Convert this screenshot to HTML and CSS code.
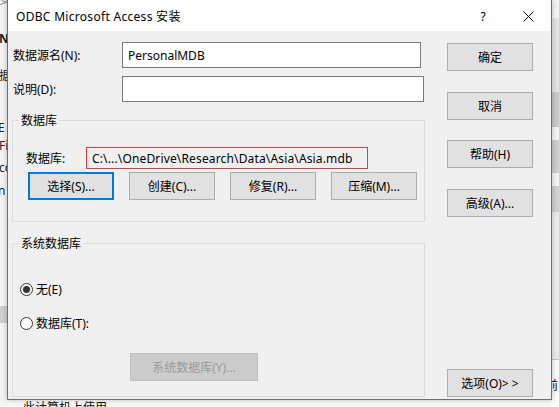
FILE: index.html
```html
<!DOCTYPE html>
<html lang="zh-CN">
<head>
<meta charset="utf-8">
<title>ODBC Microsoft Access 安装</title>
<link rel="stylesheet" href="styles.css">
</head>
<body>
<div class="desktop">
  <div class="bg-left">
    <div class="frag f1">安</div>
    <div class="frag f2">N</div>
    <div class="frag f3">据</div>
    <div class="frag f4">E</div>
    <div class="frag f5">Fi</div>
    <div class="frag f6">co</div>
    <div class="frag f7">n</div>
    <div class="band"></div>
  </div>
  <div class="bg-center">
    <div class="bg-note">此计算机上使用。</div>
  </div>
  <div class="bg-right">
    <div class="s s1"></div>
    <div class="s s2"></div>
    <div class="s s3"></div>
    <div class="s s4"></div>
    <div class="s s5"></div>
    <div class="s s6"></div>
    <div class="s s7"></div>
    <div class="s s8"></div>
    <div class="s s9"><span>前</span></div>
  </div>

  <div class="dialog">
    <div class="titlebar">
      <span class="title">ODBC Microsoft Access 安装</span>
      <span class="help">?</span>
      <svg class="close" width="11" height="11" viewBox="0 0 11 11"><path d="M0.5 0.5L10.5 10.5M10.5 0.5L0.5 10.5" stroke="#000" stroke-width="1" fill="none"/></svg>
    </div>
    <div class="body">
      <div class="main">
        <div class="row">
          <span class="lbl">数据源名(N):</span>
          <div class="input in1">PersonalMDB</div>
        </div>
        <div class="row row2">
          <span class="lbl">说明(D):</span>
          <div class="input in2"></div>
        </div>
        <fieldset class="group g1">
          <legend>数据库</legend>
          <div class="dbrow">
            <span class="dblbl">数据库:</span>
            <div class="path">C:\...\OneDrive\Research\Data\Asia\Asia.mdb</div>
          </div>
          <div class="btnrow">
            <button class="btn focus">选择(S)...</button>
            <button class="btn">创建(C)...</button>
            <button class="btn">修复(R)...</button>
            <button class="btn">压缩(M)...</button>
          </div>
        </fieldset>
        <fieldset class="group g2">
          <legend>系统数据库</legend>
          <div class="radio r1"><span class="dot checked"></span><span>无(E)</span></div>
          <div class="radio r2"><span class="dot"></span><span>数据库(T):</span></div>
          <button class="btn sysdb" disabled>系统数据库(Y)...</button>
        </fieldset>
      </div>
      <div class="side">
        <button class="btn sb b1">确定</button>
        <button class="btn sb b2">取消</button>
        <button class="btn sb b3">帮助(H)</button>
        <button class="btn sb b4">高级(A)...</button>
        <button class="btn sb b5">选项(O)&gt; &gt;</button>
      </div>
    </div>
  </div>
</div>
</body>
</html>
```
FILE: styles.css
```css
* { box-sizing: border-box; }
html, body {
  margin: 0;
  padding: 0;
  width: 559px;
  height: 407px;
  overflow: hidden;
}
body {
  font-family: "Noto Sans", "Noto Sans CJK SC", sans-serif;
  font-size: 12px;
  color: #000;
  background: #f7f7f7;
}
.desktop {
  position: relative;
  width: 559px;
  height: 407px;
  display: flex;
  overflow: hidden;
}

/* background window fragments */
.bg-left {
  width: 7px;
  flex: none;
  overflow: hidden;
  background: #f5f5f5;
  display: flex;
  flex-direction: column;
  white-space: nowrap;
  line-height: 12px;
  font-size: 12px;
}
.frag { height: 12px; margin-left: -1px; }
.f1 { margin-top: -6px; color: #999; }
.f2 { margin-top: 27px; font-weight: bold; color: #222; }
.f3 { margin-top: 25px; color: #222; }
.f4 { margin-top: 40px; color: #222; margin-left: -2px; }
.f5 { margin-top: 6px; color: #222; }
.f6 { margin-top: 10px; color: #222; }
.f7 { margin-top: 11px; color: #222; margin-left: -2px; }
.band { margin-top: 109px; height: 17px; background: #cfcfcf; }

.bg-center {
  flex: 1;
  display: flex;
  flex-direction: column;
  justify-content: flex-end;
  background: #fafafa;
}
.bg-note {
  padding-left: 16px;
  height: 7px;
  line-height: 16px;
  overflow: visible;
  color: #111;
  font-size: 12px;
}

.bg-right {
  width: 8px;
  flex: none;
  display: flex;
  flex-direction: column;
  background: #f3f3f3;
}
.s { flex: none; }
.s1 { height: 18px; background: #f4f4f4; }
.s2 { height: 75px; background: #e4e4e4; border-bottom: 1px solid #d0d0d0; }
.s3 { height: 34px; background: #cacaca; }
.s4 { height: 13px; background: #f6f6f6; }
.s5 { height: 33px; background: #cfcfcf; }
.s6 { height: 13px; background: #f6f6f6; }
.s7 { height: 26px; background: #d2d2d2; }
.s8 { height: 148px; background: #ececec; border-bottom: 1px solid #c9c9c9; }
.s9 { flex: 1; background: #fbfbfb; position: relative; overflow: hidden; }
.s9 span { position: absolute; left: -5px; top: 16px; font-size: 12px; }

/* dialog window */
.dialog {
  position: absolute;
  left: 7px;
  top: -1px;
  width: 545px;
  height: 401px;
  border: 1px solid #6f6f6f;
  background: #f0f0f0;
  box-shadow: 0 0 6px rgba(0,0,0,0.25);
  display: flex;
  flex-direction: column;
}
.titlebar {
  height: 31px;
  flex: none;
  background: #fff;
  display: flex;
  align-items: center;
  padding-left: 8px;
  padding-top: 1px;
}
.title { flex: 1; font-size: 12px; letter-spacing: 0.3px; }
.help { width: 12px; text-align: center; margin-right: 34px; font-size: 12px; }
.close { margin-right: 17px; }

.body {
  flex: 1;
  display: flex;
  padding: 11px 0 0 4px;
}
.main {
  width: 413px;
  flex: none;
  display: flex;
  flex-direction: column;
}
.row {
  display: flex;
  align-items: center;
  height: 26px;
}
.row2 { margin-top: 8px; }
.lbl { width: 110px; padding-left: 1px; }
.input {
  height: 26px;
  background: #fff;
  border: 1px solid #7a7a7a;
  padding-left: 5px;
  display: flex;
  align-items: center;
}
.in1 { width: 299px; }
.in2 { width: 302px; }

.group {
  margin: 0;
  padding: 0;
  border: 1px solid #dcdcdc;
  min-width: 0;
}
.group legend {
  margin-left: 6px;
  padding: 0 2px;
  line-height: 15px;
  font-size: 12px;
}
.g1 { margin-top: 11px; padding-bottom: 21px; }
.g2 { margin-top: 14px; padding-bottom: 15px; flex: none; }

.dbrow {
  margin-top: 19px;
  display: flex;
  align-items: center;
  padding-left: 13px;
}
.dblbl { width: 60px; }
.path {
  width: 282px;
  height: 22px;
  border: 1px solid #dd3a44;
  padding-left: 5px;
  display: flex;
  align-items: center;
  white-space: nowrap;
  letter-spacing: 0.15px;
}
.btnrow {
  margin-top: 3px;
  display: flex;
  gap: 15px;
  padding-left: 15px;
}

.btn {
  font-family: inherit;
  font-size: 12px;
  color: #000;
  background: #e1e1e1;
  border: 1px solid #adadad;
  width: 86px;
  height: 28px;
  padding: 0;
  margin: 0;
  display: flex;
  align-items: center;
  justify-content: center;
}
.btn.focus { border: 2px solid #0078d7; }
.btn.sysdb {
  width: 128px;
  margin-top: 22px;
  margin-left: 117px;
  background: #cccccc;
  border-color: #bfbfbf;
  color: #9a9a9a;
}

.radio {
  display: flex;
  align-items: center;
  height: 16px;
  padding-left: 7px;
  gap: 3px;
}
.r1 { margin-top: 30px; }
.r2 { margin-top: 18px; }
.dot {
  width: 13px;
  height: 13px;
  border-radius: 50%;
  border: 1px solid #333;
  background: #fff;
  display: flex;
  align-items: center;
  justify-content: center;
}
.dot.checked::after {
  content: "";
  width: 7px;
  height: 7px;
  border-radius: 50%;
  background: #333;
}

.side {
  margin-left: 22px;
  width: 86px;
  display: flex;
  flex-direction: column;
  padding-bottom: 2px;
}
.sb { flex: none; }
.b1 { margin-top: 1px; }
.b2 { margin-top: 21px; }
.b3 { margin-top: 20px; }
.b4 { margin-top: 21px; }
.b5 { margin-top: auto; }
```
